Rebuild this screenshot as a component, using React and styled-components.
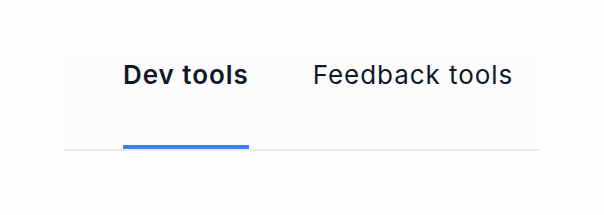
import React, { useState } from "react";
import styled, { createGlobalStyle } from "styled-components";

const GlobalStyle = createGlobalStyle`
  body {
    margin: 0;
    background: #fdfdfd;
    font-family: Inter, "Noto Sans", sans-serif;
  }
`;

const Page = styled.div`
  padding: 57px 64px 0;
`;

const TabList = styled.nav`
  display: flex;
  gap: 64px;
  padding-left: 59px;
  background: #fcfcfd;
  border-bottom: 2px solid #ebebeb;
`;

const Tab = styled.button`
  appearance: none;
  background: none;
  border: none;
  border-bottom: 4px solid ${p => (p.$active ? "#3b82f6" : "transparent")};
  padding: 0 0 52px;
  font-family: inherit;
  font-size: 26px;
  line-height: 36px;
  letter-spacing: 0.95px;
  font-weight: ${p => (p.$active ? 600 : 400)};
  color: #111827;
  cursor: pointer;
`;

const tabs = ["Dev tools", "Feedback tools"];

export default function App() {
  const [active, setActive] = useState(0);
  return (
    <>
      <GlobalStyle />
      <Page>
        <TabList>
          {tabs.map((t, i) => (
            <Tab key={t} $active={i === active} onClick={() => setActive(i)}>
              {t}
            </Tab>
          ))}
        </TabList>
      </Page>
    </>
  );
}
